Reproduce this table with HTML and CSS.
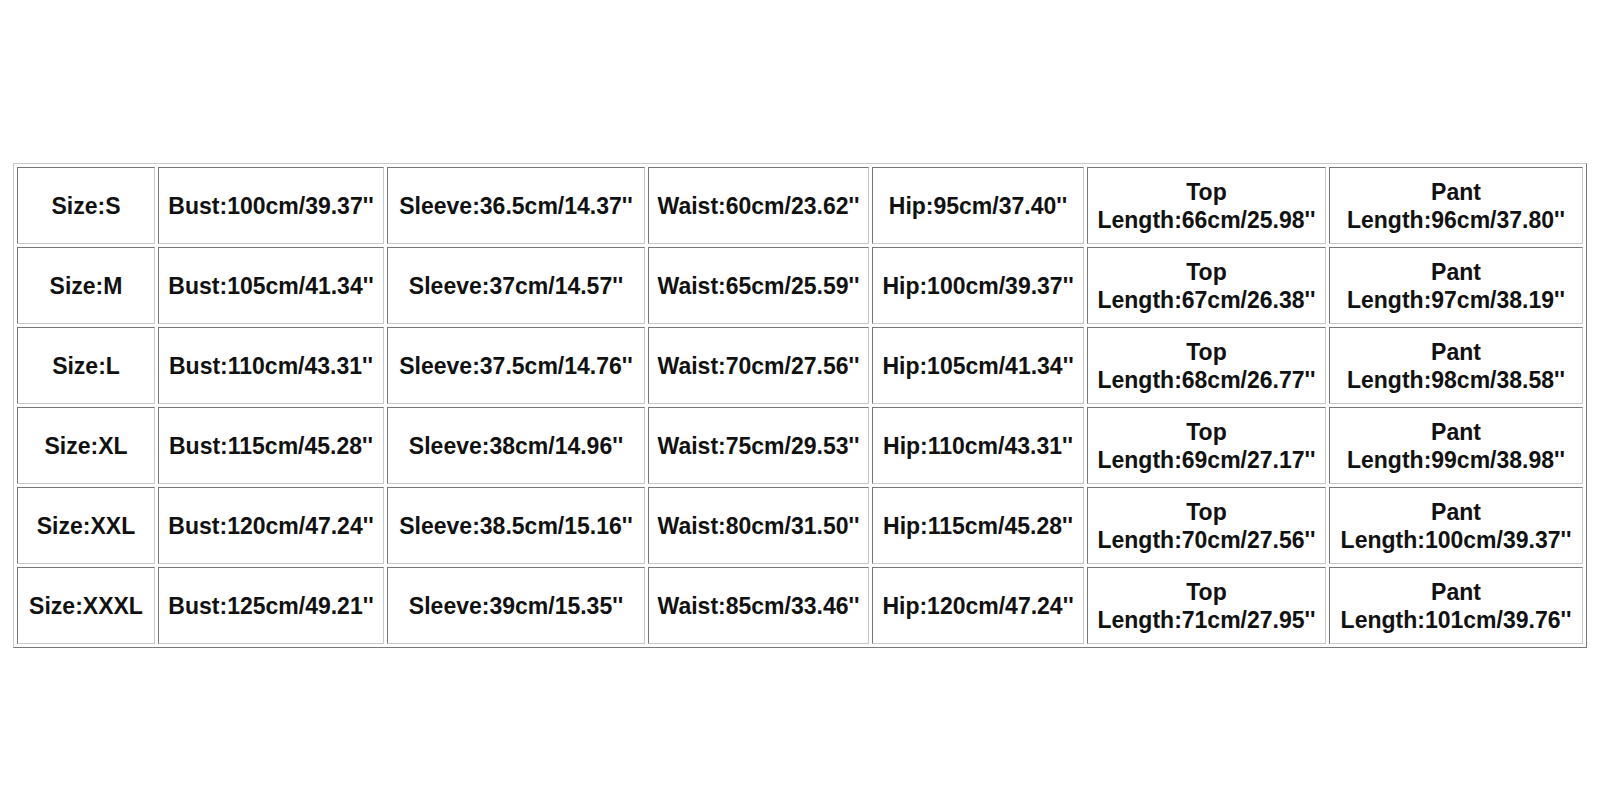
FILE: index.html
```html
<!DOCTYPE html>
<html>
<head>
<meta charset="utf-8">
<link rel="stylesheet" href="styles.css">
</head>
<body>
<div class="page">
  <div class="chart">
    <div class="cell">Size:S</div>
    <div class="cell">Bust:100cm/39.37''</div>
    <div class="cell">Sleeve:36.5cm/14.37''</div>
    <div class="cell">Waist:60cm/23.62''</div>
    <div class="cell">Hip:95cm/37.40''</div>
    <div class="cell">Top<br>Length:66cm/25.98''</div>
    <div class="cell">Pant<br>Length:96cm/37.80''</div>

    <div class="cell">Size:M</div>
    <div class="cell">Bust:105cm/41.34''</div>
    <div class="cell">Sleeve:37cm/14.57''</div>
    <div class="cell">Waist:65cm/25.59''</div>
    <div class="cell">Hip:100cm/39.37''</div>
    <div class="cell">Top<br>Length:67cm/26.38''</div>
    <div class="cell">Pant<br>Length:97cm/38.19''</div>

    <div class="cell">Size:L</div>
    <div class="cell">Bust:110cm/43.31''</div>
    <div class="cell">Sleeve:37.5cm/14.76''</div>
    <div class="cell">Waist:70cm/27.56''</div>
    <div class="cell">Hip:105cm/41.34''</div>
    <div class="cell">Top<br>Length:68cm/26.77''</div>
    <div class="cell">Pant<br>Length:98cm/38.58''</div>

    <div class="cell">Size:XL</div>
    <div class="cell">Bust:115cm/45.28''</div>
    <div class="cell">Sleeve:38cm/14.96''</div>
    <div class="cell">Waist:75cm/29.53''</div>
    <div class="cell">Hip:110cm/43.31''</div>
    <div class="cell">Top<br>Length:69cm/27.17''</div>
    <div class="cell">Pant<br>Length:99cm/38.98''</div>

    <div class="cell">Size:XXL</div>
    <div class="cell">Bust:120cm/47.24''</div>
    <div class="cell">Sleeve:38.5cm/15.16''</div>
    <div class="cell">Waist:80cm/31.50''</div>
    <div class="cell">Hip:115cm/45.28''</div>
    <div class="cell">Top<br>Length:70cm/27.56''</div>
    <div class="cell">Pant<br>Length:100cm/39.37''</div>

    <div class="cell">Size:XXXL</div>
    <div class="cell">Bust:125cm/49.21''</div>
    <div class="cell">Sleeve:39cm/15.35''</div>
    <div class="cell">Waist:85cm/33.46''</div>
    <div class="cell">Hip:120cm/47.24''</div>
    <div class="cell">Top<br>Length:71cm/27.95''</div>
    <div class="cell">Pant<br>Length:101cm/39.76''</div>
  </div>
</div>
</body>
</html>
```

FILE: styles.css
```css
html, body {
  margin: 0;
  padding: 0;
  background: #ffffff;
}

.page {
  padding: 163px 0 0 13px;
}

.chart {
  display: grid;
  grid-template-columns: 138px 226px 258px 221px 212px 239px 254px;
  grid-auto-rows: 77px;
  gap: 3px;
  padding: 3px;
  width: max-content;
  border-style: solid;
  border-width: 1px;
  border-color: #c8c8c8 #777777 #777777 #c8c8c8;
  background: #ffffff;
}

.cell {
  box-sizing: border-box;
  display: flex;
  align-items: center;
  justify-content: center;
  text-align: center;
  border-style: solid;
  border-width: 1px;
  border-color: #777777 #c8c8c8 #c8c8c8 #777777;
  font-family: "Liberation Sans", Arial, sans-serif;
  font-weight: bold;
  font-size: 23px;
  line-height: 28px;
  color: #111111;
  white-space: nowrap;
}
```
